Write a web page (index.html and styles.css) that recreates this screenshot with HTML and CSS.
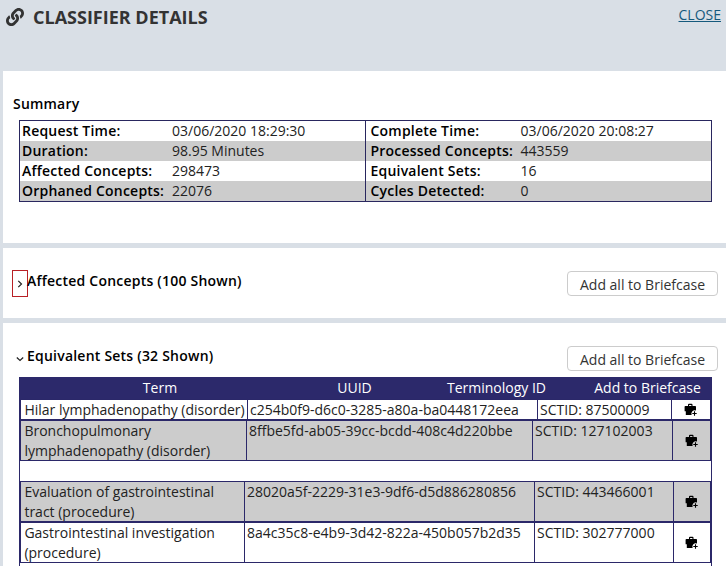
FILE: index.html
```
<!DOCTYPE html>
<html lang="en">
<head>
<meta charset="utf-8">
<title>Classifier Details</title>
<link rel="stylesheet" href="styles.css">
</head>
<body>
<svg width="0" height="0" class="defs" aria-hidden="true">
  <symbol id="case" viewBox="0 0 14 14">
    <path d="M4 3V1.8Q4 .8 5 .8H7.500Q8.500 .8 8.500 1.800V3H11.200Q12 3 12 3.800V7.600A3.400 3.400 0 0 0 7.600 12H1.800V8.300H.6V3.800Q.6 3 1.400 3ZM5.100 3H7.400V1.900H5.100Z" fill="#000" fill-rule="evenodd"/>
    <path d="M10.500 8.300V12.700M8.300 10.500H12.700" stroke="#000" stroke-width="1.100"/>
  </symbol>
</svg>
<header class="top">
  <svg class="link" viewBox="0 0 512 512"><path fill="#333" d="M326.612 185.391c59.747 59.809 58.927 155.698.36 214.590-.11.12-.24.25-.36.37l-67.200 67.200c-59.270 59.270-155.699 59.262-214.960 0-59.270-59.260-59.270-155.700 0-214.960l37.106-37.106c9.840-9.840 26.786-3.300 27.294 10.606.648 17.722 3.826 35.527 9.690 52.721 1.986 5.822.567 12.262-3.783 16.612l-13.087 13.087c-28.026 28.026-28.905 73.660-1.155 101.960 28.024 28.579 74.086 28.749 102.325.510l67.200-67.190c28.191-28.191 28.073-73.757 0-101.830-3.701-3.694-7.429-6.564-10.341-8.569a16.037 16.037 0 0 1-6.947-12.606c-.396-10.567 3.348-21.456 11.698-29.806l21.054-21.055c5.521-5.521 14.182-6.199 20.584-1.731a152.482 152.482 0 0 1 20.522 17.197zM467.547 44.449c-59.261-59.262-155.690-59.270-214.960 0l-67.200 67.200c-.12.12-.25.25-.36.37-58.566 58.892-59.387 154.781.36 214.590a152.454 152.454 0 0 0 20.521 17.196c6.402 4.468 15.064 3.789 20.584-1.731l21.054-21.055c8.350-8.350 12.094-19.239 11.698-29.806a16.037 16.037 0 0 0-6.947-12.606c-2.912-2.005-6.640-4.875-10.341-8.569-28.073-28.073-28.191-73.639 0-101.830l67.200-67.190c28.239-28.239 74.300-28.069 102.325.510 27.750 28.300 26.872 73.934-1.155 101.960l-13.087 13.087c-4.350 4.350-5.769 10.790-3.783 16.612 5.864 17.194 9.042 34.999 9.690 52.721.509 13.906 17.454 20.446 27.294 10.606l37.106-37.106c59.271-59.259 59.271-155.699.001-214.959z"/></svg>
  <h1>CLASSIFIER DETAILS</h1>
  <a class="close">CLOSE</a>
</header>
<section class="panel summary">
  <h2>Summary</h2>
  <div class="facts">
    <dl>
      <div><dt>Request Time:</dt><dd>03/06/2020 18:29:30</dd></div>
      <div><dt>Duration:</dt><dd>98.95 Minutes</dd></div>
      <div><dt>Affected Concepts:</dt><dd>298473</dd></div>
      <div><dt>Orphaned Concepts:</dt><dd>22076</dd></div>
    </dl>
    <dl>
      <div><dt>Complete Time:</dt><dd>03/06/2020 20:08:27</dd></div>
      <div><dt>Processed Concepts:</dt><dd>443559</dd></div>
      <div><dt>Equivalent Sets:</dt><dd>16</dd></div>
      <div><dt>Cycles Detected:</dt><dd>0</dd></div>
    </dl>
  </div>
</section>
<section class="panel affected">
  <div class="bar">
    <span class="toggle boxed"><svg viewBox="0 0 8 8"><path d="M2.300 .8L5.500 4L2.300 7.200"/></svg></span>
    <h2>Affected Concepts (100 Shown)</h2>
    <button>Add all to Briefcase</button>
  </div>
</section>
<section class="panel sets">
  <div class="bar">
    <span class="toggle"><svg viewBox="0 0 8 8"><path d="M.8 2.500L4 5.500L7.200 2.500"/></svg></span>
    <h2>Equivalent Sets (32 Shown)</h2>
    <button>Add all to Briefcase</button>
  </div>
  <div class="table">
    <div class="head"><span>Term</span><span>UUID</span><span>Terminology ID</span><span>Add to Briefcase</span></div>
    <div class="group g1">
      <div class="row"><span>Hilar lymphadenopathy (disorder)</span><span>c254b0f9-d6c0-3285-a80a-ba0448172eea</span><span>SCTID: 87500009</span><span class="act"><svg><use href="#case"/></svg></span></div>
    </div>
    <div class="group g2">
      <div class="row shade"><span>Bronchopulmonary<br>lymphadenopathy (disorder)</span><span>8ffbe5fd-ab05-39cc-bcdd-408c4d220bbe</span><span>SCTID: 127102003</span><span class="act"><svg><use href="#case"/></svg></span></div>
    </div>
    <div class="spacer"></div>
    <div class="group g3">
      <div class="row shade"><span>Evaluation of gastrointestinal<br>tract (procedure)</span><span>28020a5f-2229-31e3-9df6-d5d886280856</span><span>SCTID: 443466001</span><span class="act"><svg><use href="#case"/></svg></span></div>
    </div>
    <div class="group g3">
      <div class="row"><span>Gastrointestinal investigation<br>(procedure)</span><span>8a4c35c8-e4b9-3d42-822a-450b057b2d35</span><span>SCTID: 302777000</span><span class="act"><svg><use href="#case"/></svg></span></div>
    </div>
    <div class="spacer"></div>
  </div>
</section>
</body>
</html>
```
FILE: styles.css
```
* { box-sizing: border-box; }
html, body { height: 100%; overflow: hidden; }
body {
  margin: 0;
  padding-left: 3px;
  background: #d9dfe6;
  color: #222;
  font: 14px/20px "Open Sans", sans-serif;
}
.defs { position: absolute; }
h1, h2, dl, dd { margin: 0; }
.top {
  display: flex;
  align-items: flex-start;
  height: 71px;
  padding: 7px 5px 0 3px;
}
.link { width: 18px; height: 18px; margin-top: 1px; }
h1 {
  margin-left: 9px;
  font-size: 18px;
  line-height: 20px;
  font-weight: 700;
  color: #333;
}
.close {
  margin: -2px 0 0 auto;
  color: #15597c;
  text-decoration: underline;
}
h2 { font-size: 14px; line-height: 20px; font-weight: 600; color: #000; }
.panel { background: #fff; margin-bottom: 5px; }
.summary { height: 172px; padding: 23px 14px 0 10px; }
.summary h2 { letter-spacing: .2px; }
.facts {
  display: grid;
  grid-template-columns: 345px 346px;
  width: 693px;
  height: 82px;
  margin: 6px 0 0 6px;
  border: 1px solid #29275f;
}
.facts dl + dl { border-left: 1px solid #29275f; }
.facts dl > div { display: grid; grid-template-columns: 150px 1fr; height: 20px; padding-left: 2px; }
.facts dl + dl > div { padding-left: 4.5px; }
.facts dl > div:nth-child(even) { background: #ccc; }
dt { font-weight: 600; color: #000; white-space: nowrap; letter-spacing: .21px; }
.affected { height: 70px; padding-top: 22px; }
.sets { height: 260px; margin: 0; padding-top: 22px; }
.bar { display: flex; align-items: flex-start; padding: 0 8px 0 9px; }
.toggle { display: grid; place-items: center; width: 16px; height: 27px; }
.boxed { border: 1px solid #b82025; }
.toggle svg { width: 8px; height: 8px; fill: none; stroke: #222; stroke-width: 1.2; }
.bar h2 { margin: 1px 0 0 -1px; letter-spacing: .22px; }
.bar button {
  width: 151px;
  height: 25px;
  margin: 1px 0 0 auto;
  padding: 2px 0 0;
  border: 1px solid #ccc;
  border-radius: 4px;
  background: #fff;
  color: #333;
  font: 14px/21px "Open Sans", sans-serif;
}
.table { width: 693px; margin: 5px 0 0 16px; border: 1px solid #2b2869; border-top: 0; }
.head {
  display: grid;
  grid-template-columns: 280px 109px 175px 1fr;
  height: 22px;
  line-height: 21px;
  background: #2c296b;
  color: #fff;
  text-align: center;
  font-weight: 500;
}
.group { border: 1px solid #2b2869; }
.row { display: grid; height: 39px; }
.g1 .row { height: 19px; line-height: 19px; grid-template-columns: 226px 290px 134px 1fr; }
.g2 .row { grid-template-columns: 225px 286px 140px 1fr; }
.g3 .row { grid-template-columns: 223px 290px 139px 1fr; }
.row span { padding-left: 2px; white-space: nowrap; }
.row span:first-child { padding-left: 3.4px; }
.row span + span { border-left: 1px solid #2b2869; }
.shade { background: #ccc; }
.row .act { display: grid; place-items: center; padding: 0; }
.act svg { width: 14px; height: 14px; }
.spacer { height: 20px; }
```
